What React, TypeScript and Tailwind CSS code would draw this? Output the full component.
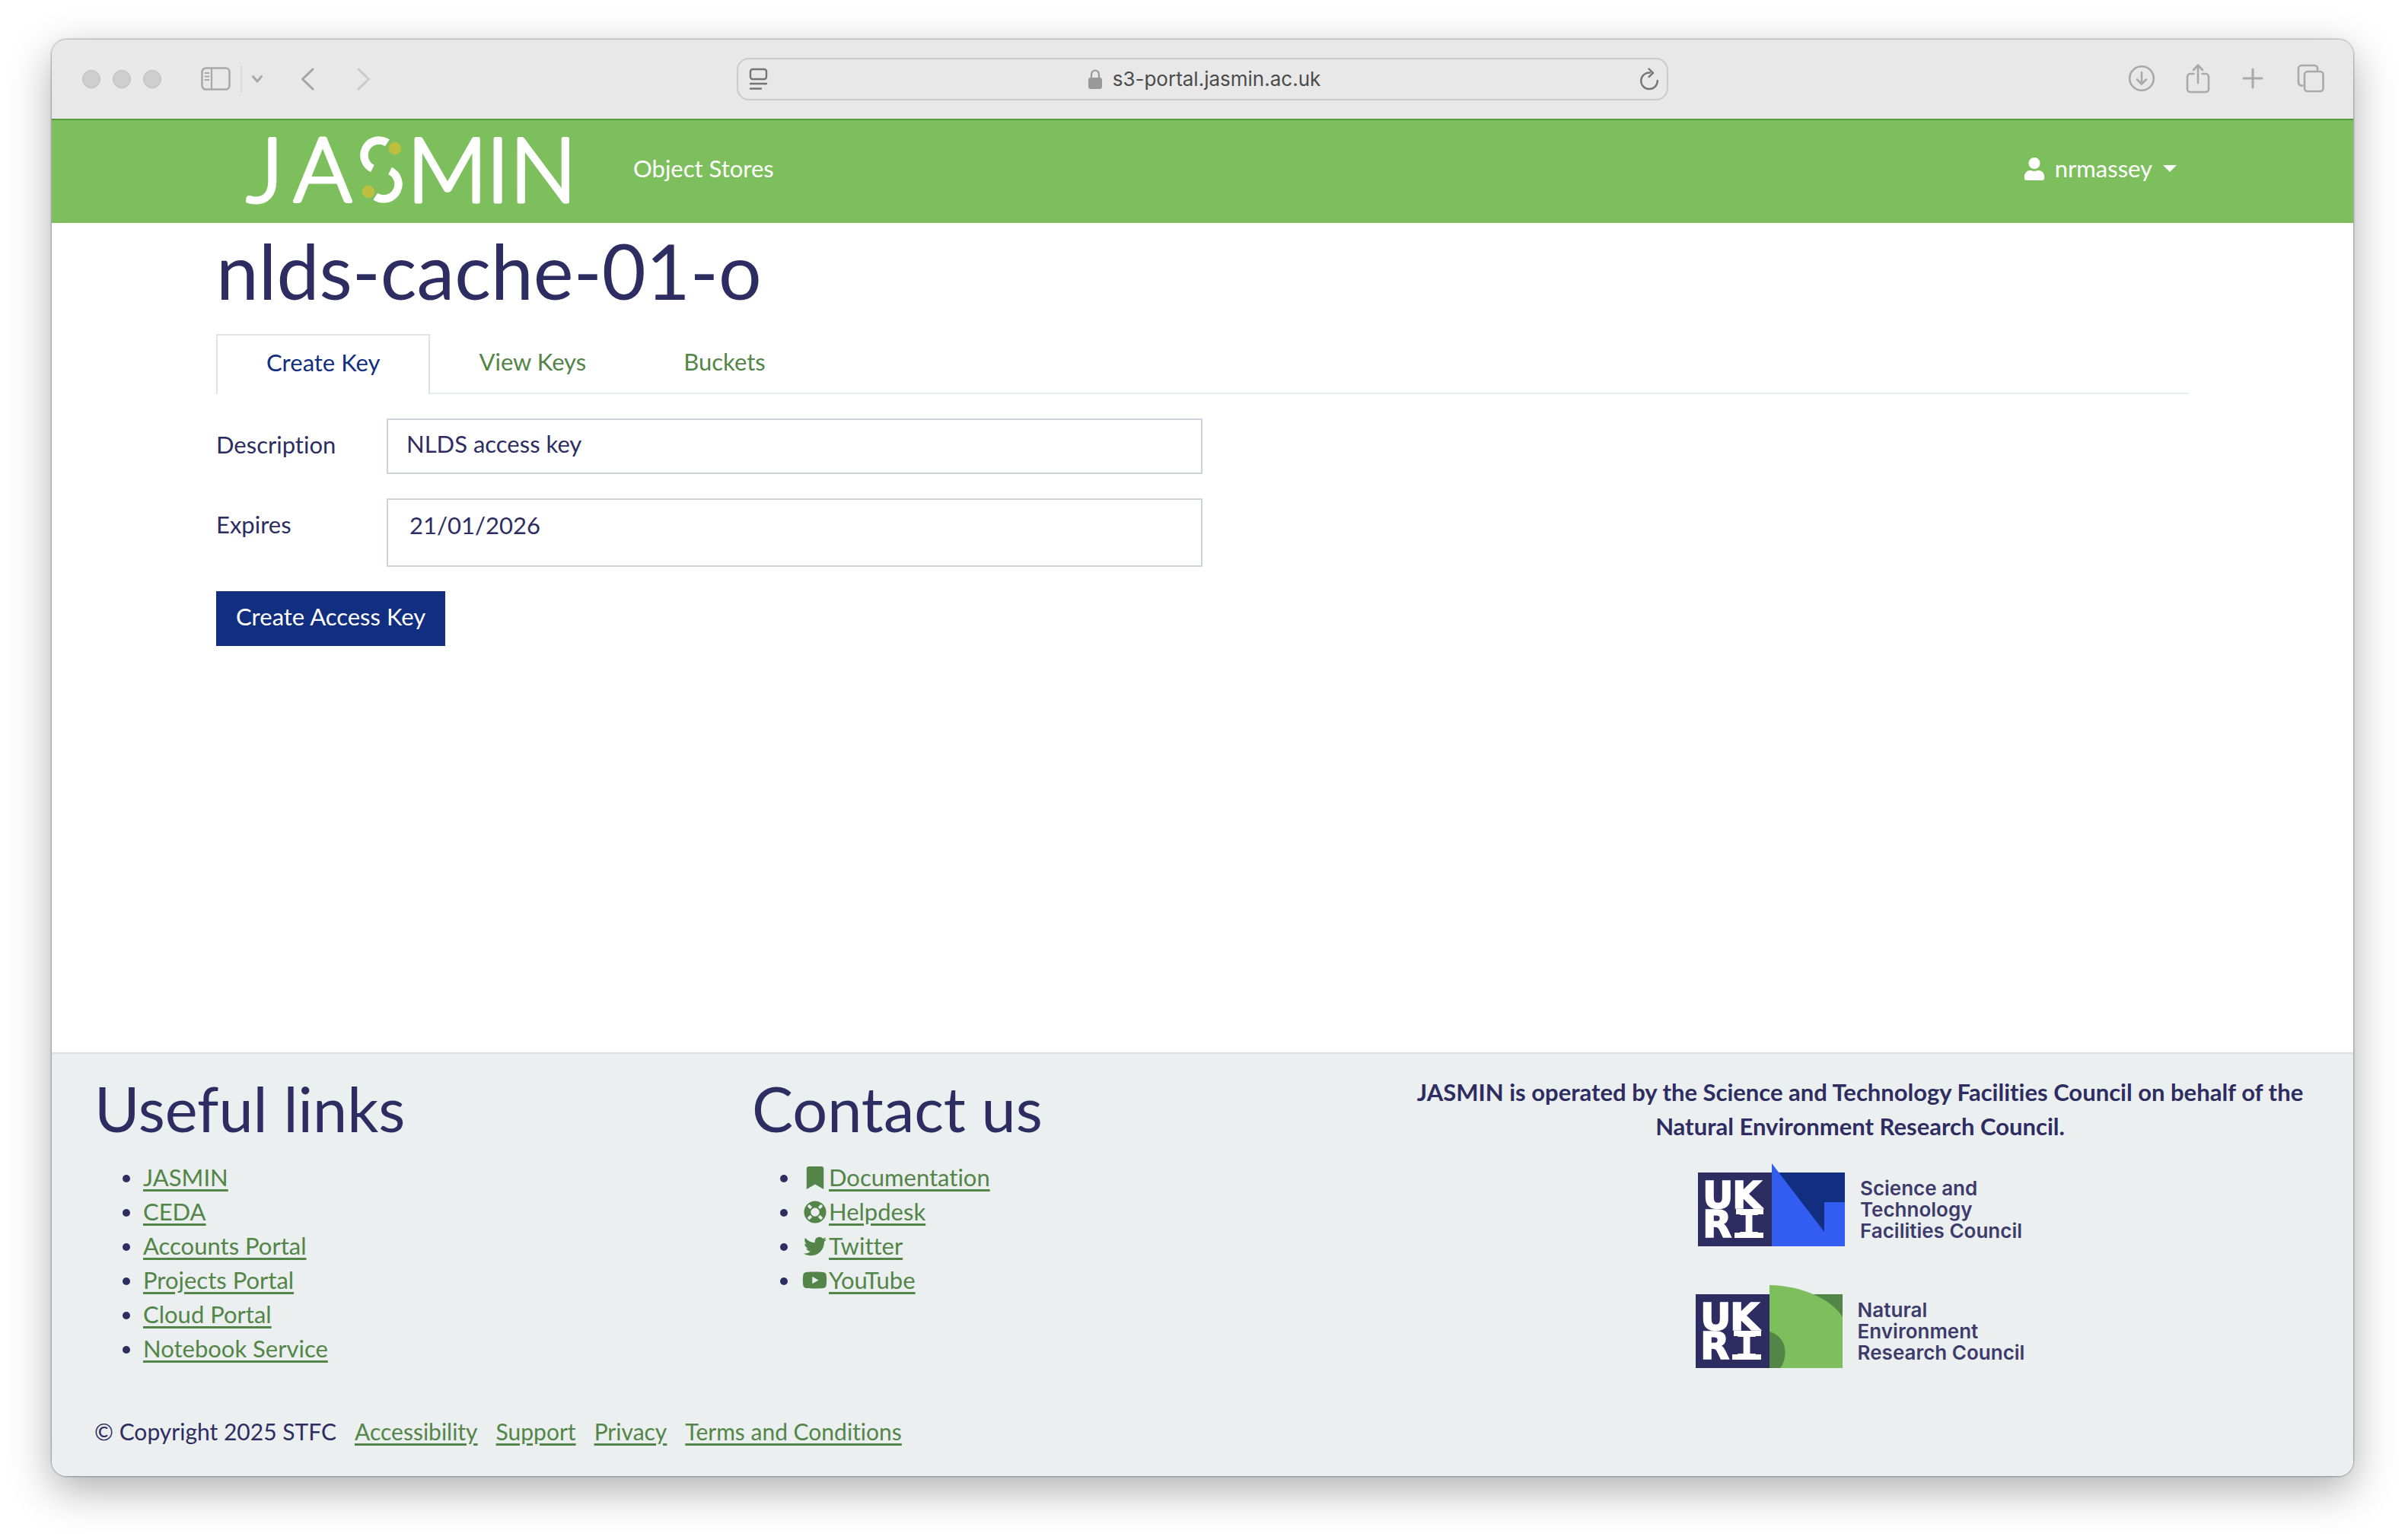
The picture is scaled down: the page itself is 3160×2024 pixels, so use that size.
import type { ReactNode } from "react";
import { FaBookmark, FaLifeRing, FaTwitter, FaUser, FaYoutube } from "react-icons/fa";

const usefulLinks = ["JASMIN", "CEDA", "Accounts Portal", "Projects Portal", "Cloud Portal", "Notebook Service"];

const contactLinks = [
  { label: "Documentation", icon: <FaBookmark className="size-[30px]" /> },
  { label: "Helpdesk", icon: <FaLifeRing className="size-[30px]" /> },
  { label: "Twitter", icon: <FaTwitter className="size-[30px]" /> },
  { label: "YouTube", icon: <FaYoutube className="size-[33px]" /> },
];

const legalLinks = ["Accessibility", "Support", "Privacy", "Terms and Conditions"];

function ToolButton({ label, className, children }: { label: string; className: string; children: ReactNode }) {
  return (
    <button type="button" aria-label={label} className={className}>
      {children}
    </button>
  );
}

function BrowserToolbar() {
  return (
    <div className="grid h-[104px] grid-cols-[1fr_1224px_1fr] items-center bg-[#e8e8e8] text-[#a9a9a9]">
      <div className="flex items-center pl-10">
        <div className="flex gap-4">
          <span className="size-6 rounded-full border border-[#b9b9b9] bg-[#cecece]" />
          <span className="size-6 rounded-full border border-[#b9b9b9] bg-[#cecece]" />
          <span className="size-6 rounded-full border border-[#b9b9b9] bg-[#cecece]" />
        </div>
        <ToolButton label="Show sidebar" className="ml-[52px]">
          <svg width="40" height="32" viewBox="0 0 40 32" fill="none" stroke="currentColor" strokeWidth="2.6">
            <rect x="1.5" y="1.5" width="36" height="28" rx="5" />
            <path d="M14 2v28" strokeWidth="2.2" />
            <path d="M5.5 8h5M5.5 12.500h5M5.5 17h5" strokeWidth="1.8" strokeLinecap="round" />
          </svg>
        </ToolButton>
        <span className="ml-3 h-9 w-0.5 bg-[#dadada]" />
        <ToolButton label="Tab groups" className="ml-3">
          <svg width="16" height="12" viewBox="0 0 16 12" fill="none" stroke="currentColor" strokeWidth="3" strokeLinecap="round" strokeLinejoin="round">
            <path d="M2.500 2.500l5.500 6.500l5.500-6.500" />
          </svg>
        </ToolButton>
        <ToolButton label="Back" className="ml-12">
          <svg width="20" height="32" viewBox="0 0 20 32" fill="none" stroke="#a3a3a3" strokeWidth="3" strokeLinecap="round" strokeLinejoin="round">
            <path d="M17 3L3.500 16L17 29" />
          </svg>
        </ToolButton>
        <ToolButton label="Forward" className="ml-[54px]">
          <svg width="20" height="32" viewBox="0 0 20 32" fill="none" stroke="#cbcbcb" strokeWidth="3" strokeLinecap="round" strokeLinejoin="round">
            <path d="M3 3L16.500 16L3 29" />
          </svg>
        </ToolButton>
      </div>

      <div className="flex h-14 items-center justify-between rounded-2xl border-2 border-[#cbcbcb] pr-[10px] pl-[14px] text-[#757575]">
        <ToolButton label="Page menu" className="">
          <svg width="26" height="30" viewBox="0 0 26 30" fill="none" stroke="currentColor" strokeWidth="2.4" strokeLinecap="round">
            <rect x="2" y="2" width="21" height="13" rx="3" />
            <path d="M2 21h21M2 27.500h14" />
          </svg>
        </ToolButton>
        <div className="flex items-center gap-[13px]">
          <svg width="20" height="28" viewBox="0 0 20 28" fill="none" aria-hidden="true">
            <path d="M5 13V8a5 5.500 0 0 1 10 0v5" stroke="#999999" strokeWidth="2.200" />
            <rect x="1" y="12" width="18" height="15" rx="3" fill="#999999" />
          </svg>
          <span className="font-['Inter',sans-serif] text-[26px] leading-8 text-[#4b4b4b]">s3-portal.jasmin.ac.uk</span>
        </div>
        <ToolButton label="Reload" className="">
          <svg width="26" height="30" viewBox="0 0 26 30" fill="none" stroke="currentColor" strokeWidth="2.4" strokeLinecap="round" strokeLinejoin="round">
            <path d="M14 6.500A10.800 10.800 0 1 0 23.800 17" />
            <path d="M12.500 1.500l5.500 5.300l-5.500 5.300" />
          </svg>
        </ToolButton>
      </div>

      <div className="flex items-center justify-end pr-[38px] pb-0.5">
        <ToolButton label="Downloads" className="">
          <svg width="36" height="36" viewBox="0 0 36 36" fill="none" stroke="currentColor" strokeWidth="2.6" strokeLinecap="round" strokeLinejoin="round">
            <circle cx="18" cy="18" r="15.800" />
            <path d="M18 10v15.500M12 19.500l6 6l6-6" />
          </svg>
        </ToolButton>
        <ToolButton label="Share" className="ml-10">
          <svg width="32" height="40" viewBox="0 0 32 40" fill="none" stroke="currentColor" strokeWidth="2.600" strokeLinecap="round" strokeLinejoin="round">
            <path d="M10.500 14H6a4 4 0 0 0-4 4v16a4 4 0 0 0 4 4h20a4 4 0 0 0 4-4V18a4 4 0 0 0-4-4h-4.500" />
            <path d="M16 26V3M10 9l6-6.500l6 6.500" />
          </svg>
        </ToolButton>
        <ToolButton label="New tab" className="ml-[42px]">
          <svg width="28" height="28" viewBox="0 0 28 28" fill="none" stroke="currentColor" strokeWidth="3" strokeLinecap="round">
            <path d="M14 2v24M2 14h24" />
          </svg>
        </ToolButton>
        <ToolButton label="Tab overview" className="ml-11">
          <svg width="36" height="38" viewBox="0 0 36 38" fill="none" stroke="currentColor" strokeWidth="2.600" strokeLinejoin="round">
            <path d="M8.500 28.500H6a4 4 0 0 1-4-4V6a4 4 0 0 1 4-4h17a4 4 0 0 1 4 4v3" />
            <rect x="10" y="10" width="24.500" height="26" rx="4" />
          </svg>
        </ToolButton>
      </div>
    </div>
  );
}

function JasminLogo() {
  return (
    <svg width="432" height="92" viewBox="0 0 432 92" role="img" aria-label="JASMIN" className="shrink-0 overflow-visible">
      <g fill="#ffffff" stroke="#ffffff" strokeWidth="5" strokeLinejoin="round" className="font-['Lato',sans-serif] text-[116px] font-light">
        <text x="6" y="87">J</text>
        <text x="68" y="87">A</text>
        <text x="217" y="87">M</text>
        <text x="321" y="87">I</text>
        <text x="352" y="87">N</text>
      </g>
      <g fill="none" stroke="#ffffff" strokeWidth="10.500">
        <circle cx="180" cy="26" r="19.500" pathLength="360" strokeDasharray="188 172" transform="rotate(116 180 26)" />
        <circle cx="186" cy="64" r="19.500" pathLength="360" strokeDasharray="188 172" transform="rotate(-64 186 64)" />
      </g>
      <circle cx="201" cy="17" r="8.300" fill="#bdbf3f" />
      <circle cx="166" cy="74" r="8.300" fill="#bdbf3f" />
    </svg>
  );
}

function SiteNav() {
  return (
    <nav className="flex h-[137px] items-center border-t-2 border-[#5a9a3c] bg-[#7dbf5d] px-[216px] pb-2 text-white">
      <a href="#home" className="ml-[34px] pt-1">
        <JasminLogo />
      </a>
      <a href="#object-stores" className="ml-[82px]">
        Object Stores
      </a>
      <button type="button" className="mr-4 ml-auto flex items-center">
        <FaUser className="size-[30px]" aria-hidden="true" />
        <span className="ml-3">nrmassey</span>
        <svg width="18" height="9" viewBox="0 0 18 9" className="ml-[14px]" aria-hidden="true">
          <path d="M0 0h18l-9 9z" fill="currentColor" />
        </svg>
      </button>
    </nav>
  );
}

function KeyForm() {
  return (
    <form className="mt-8 grid grid-cols-[224px_1072px] gap-y-8" onSubmit={(e) => e.preventDefault()}>
      <label htmlFor="description" className="pt-3">
        Description
      </label>
      <input
        id="description"
        type="text"
        defaultValue="NLDS access key"
        className="h-[73px] border-2 border-[#cdd3d8] bg-white px-6 pb-2 outline-none"
      />
      <label htmlFor="expires" className="pt-3">
        Expires
      </label>
      <input
        id="expires"
        type="text"
        defaultValue="21/01/2026"
        className="h-[90px] border-2 border-[#cdd3d8] bg-white px-7 pb-5 outline-none"
      />
      <div className="col-span-2">
        <button type="submit" className="h-[72px] bg-[#112e81] px-[26px] pb-1.5 text-white">
          Create Access Key
        </button>
      </div>
    </form>
  );
}

function UkriMark({ children, label }: { children: ReactNode; label: string }) {
  return (
    <svg width="193" height="109" viewBox="0 0 193 109" role="img" aria-label={label} className="shrink-0">
      <rect x="0" y="12" width="97" height="97" fill="#2e2d62" />
      {children}
      <g fill="#ffffff" stroke="#ffffff" strokeWidth="1.5" className="font-['DejaVu_Sans',sans-serif] text-[50px] font-bold">
        <text x="6" y="59">U</text>
        <text x="45" y="59">K</text>
        <text x="6" y="97">R</text>
        <text x="52" y="97" className="font-['DejaVu_Sans_Mono',monospace]">I</text>
      </g>
      <rect x="50" y="60" width="36" height="7" fill="#ffffff" />
      <rect x="48" y="91" width="38" height="7" fill="#ffffff" />
    </svg>
  );
}

function CouncilLogos() {
  return (
    <div className="mt-[26px] flex flex-col items-center gap-[51px] font-['Inter',sans-serif] text-[26px] leading-7 font-semibold text-[#3d3b6b]">
      <a href="#stfc" className="flex items-end gap-5 text-left">
        <UkriMark label="UKRI">
          <path d="M97 12h96v97H97z" fill="#112e81" />
          <path d="M97 0l69 90V51h27v58H97z" fill="#325df0" />
        </UkriMark>
        <span className="pb-1.5">
          Science and
          <br />
          Technology
          <br />
          Facilities Council
        </span>
      </a>
      <a href="#nerc" className="flex items-end gap-5 text-left">
        <UkriMark label="UKRI">
          <path d="M97 12h96v97H97z" fill="#528547" />
          <path d="M97 0C140 1 178 18 193 42V109H97z" fill="#7dbf5d" />
          <path d="M97 61C110 65 117.500 75 117.500 88C117.500 97 115 104 111 109H97z" fill="#528547" />
        </UkriMark>
        <span className="pb-1.5">
          Natural
          <br />
          Environment
          <br />
          Research Council
        </span>
      </a>
    </div>
  );
}

function SiteFooter() {
  return (
    <footer className="border-t-2 border-[#dbe1e5] bg-[#ebeff0] px-14 pt-6 pb-9">
      <div className="grid grid-cols-[864fr_864fr_1184fr]">
        <section>
          <h2 className="text-[81px] leading-[96px]">Useful links</h2>
          <ul className="mt-5 list-disc pl-16">
            {usefulLinks.map((label) => (
              <li key={label}>
                <a href="#link" className="text-[#528547] underline underline-offset-4">
                  {label}
                </a>
              </li>
            ))}
          </ul>
        </section>
        <section>
          <h2 className="text-[81px] leading-[96px]">Contact us</h2>
          <ul className="mt-5 list-disc pl-16">
            {contactLinks.map(({ label, icon }) => (
              <li key={label}>
                <span className="inline-flex h-[45px] items-center align-top text-[#528547]">
                  <span className="flex w-[37px] justify-center">{icon}</span>
                  <a href="#contact" className="underline underline-offset-4">
                    {label}
                  </a>
                </span>
              </li>
            ))}
          </ul>
        </section>
        <section className="pt-1 text-center">
          <p className="font-bold">
            JASMIN is operated by the Science and Technology Facilities Council on behalf of the Natural Environment
            Research Council.
          </p>
          <CouncilLogos />
        </section>
      </div>
      <div className="mt-[61px] flex gap-6 text-[30px]">
        <span>© Copyright 2025 STFC</span>
        {legalLinks.map((label) => (
          <a key={label} href="#legal" className="text-[#528547] underline underline-offset-4">
            {label}
          </a>
        ))}
      </div>
    </footer>
  );
}

export default function App() {
  return (
    <div className="flex min-h-screen bg-white px-[68px] pt-[52px] pb-[84px] font-['Lato',sans-serif] text-[31px] leading-[45px] text-[#2e2d62] [font-variant-ligatures:none]">
      <div className="flex flex-1 flex-col overflow-hidden rounded-[20px] bg-white shadow-[0_0_2px_1px_rgba(0,0,0,0.3),0_18px_56px_rgba(0,0,0,0.32)]">
        <BrowserToolbar />
        <SiteNav />
        <main className="flex-1 px-[216px] pt-1.5">
          <h1 className="text-[100px] leading-[112px]">nlds-cache-01-o</h1>
          <div role="tablist" className="mt-7 flex border-b-2 border-[#e8edee]">
            <button type="button" role="tab" aria-selected="true" className="-mb-0.5 h-[79px] border-2 border-b-0 border-[#dfe3e7] bg-white px-16 pb-1.5 text-[#112e81]">
              Create Key
            </button>
            <button type="button" role="tab" aria-selected="false" className="px-16 pb-1 text-[#528547]">
              View Keys
            </button>
            <button type="button" role="tab" aria-selected="false" className="px-16 pb-1 text-[#528547]">
              Buckets
            </button>
          </div>
          <KeyForm />
        </main>
        <SiteFooter />
      </div>
    </div>
  );
}
